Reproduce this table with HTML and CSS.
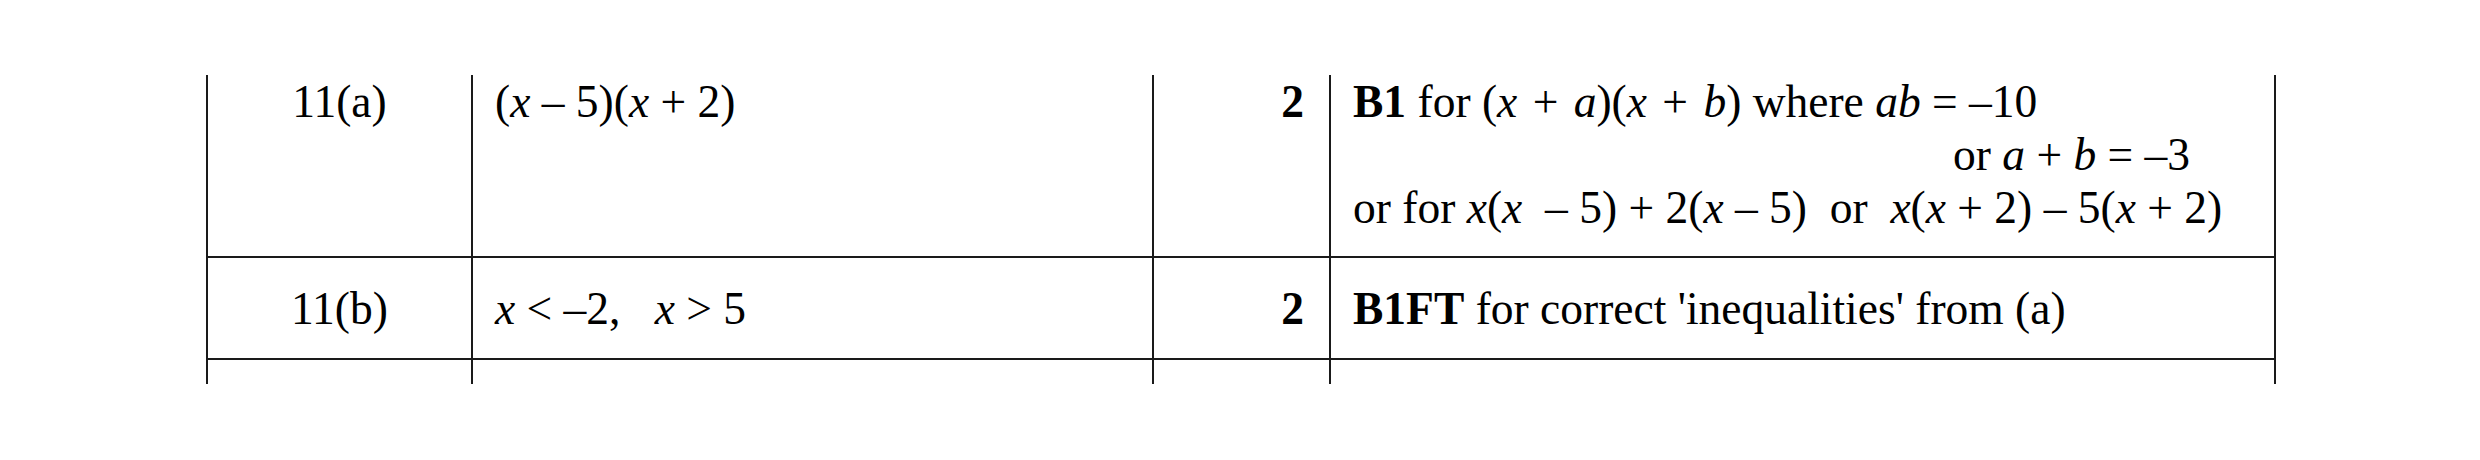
FILE: index.html
```html
<!DOCTYPE html>
<html lang="en">
<head>
<meta charset="utf-8">
<title>Mark scheme 11</title>
<link rel="stylesheet" href="styles.css">
</head>
<body>
<div class="scheme">
  <div class="cell q r1">11(a)</div>
  <div class="cell ans r1">(<i>x</i> – 5)(<i>x</i> + 2)</div>
  <div class="cell mk r1"><b>2</b></div>
  <div class="cell notes r1 last">
    <span class="ln"><b>B1</b> for (<i>x</i><span class="wsp"> + </span><i>a</i>)(<i>x</i><span class="wsp"> + </span><i>b</i>) where <i>ab</i> = –10</span>
    <span class="ln ind">or <i>a</i> + <i>b</i> = –3</span>
    <span class="ln">or for <i>x</i>(<i>x</i>&nbsp; – 5) + 2(<i>x</i> – 5) &nbsp;or &nbsp;<i>x</i>(<i>x</i> + 2) – 5(<i>x</i> + 2)</span>
  </div>

  <div class="cell q r2">11(b)</div>
  <div class="cell ans r2"><i>x</i> &lt; –2, &nbsp; <i>x</i> &gt; 5</div>
  <div class="cell mk r2"><b>2</b></div>
  <div class="cell notes r2 last"><b>B1FT</b> for correct 'inequalities' from (a)</div>

  <div class="cell r3"></div>
  <div class="cell r3"></div>
  <div class="cell r3"></div>
  <div class="cell r3 last"></div>
</div>
</body>
</html>
```

FILE: styles.css
```css
html, body {
  margin: 0;
  padding: 0;
  background: #ffffff;
}

body {
  padding: 75px 0 0 206px;
  font-family: "Liberation Serif", "Times New Roman", serif;
  font-size: 45.5px;
  line-height: 53px;
  color: #000;
}

.scheme {
  display: grid;
  grid-template-columns: 265px 681px 177px 947px;
  width: 2070px;
}

.cell {
  box-sizing: border-box;
  border-left: 2px solid #1a1a1a;
}

.cell.last {
  border-right: 2px solid #1a1a1a;
}

.r1 {
  padding-top: 0;
  padding-bottom: 22px;
  border-bottom: 2px solid #1a1a1a;
  height: 183px;
}

.r2 {
  padding-top: 24px;
  padding-bottom: 23px;
  border-bottom: 2px solid #1a1a1a;
  height: 102px;
}

.r3 {
  height: 24px;
}

.q {
  text-align: center;
}

.ans {
  padding-left: 22px;
}

.mk {
  text-align: right;
  padding-right: 25px;
}

.notes {
  padding-left: 22px;
  white-space: nowrap;
}

.ln {
  display: block;
}

.ln.ind {
  padding-left: 600px;
}

.wsp {
  word-spacing: 4px;
}

i {
  font-style: italic;
}

b {
  font-weight: bold;
}
```
